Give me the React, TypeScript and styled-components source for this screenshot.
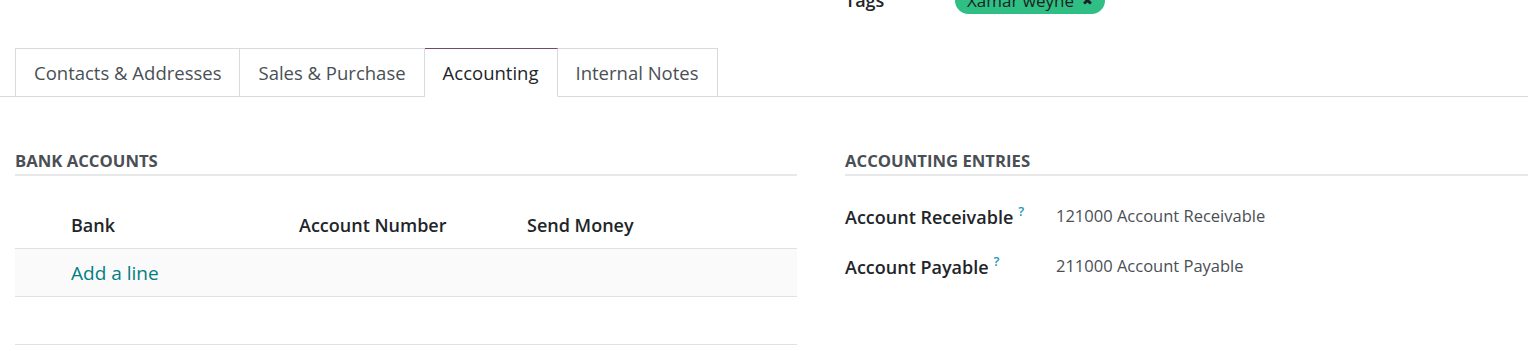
import React from "react";
import styled, { createGlobalStyle } from "styled-components";

const GlobalStyle = createGlobalStyle`
  html, body {
    margin: 0;
    padding: 0;
    background: #ffffff;
    overflow: hidden;
  }
  body {
    font-family: "Open Sans", "Noto Sans", sans-serif;
    font-size: 18px;
    color: #212529;
  }
`;

const Page = styled.div`
  width: 1528px;
  height: 351px;
  overflow: hidden;
`;

const TopRow = styled.div`
  display: grid;
  grid-template-columns: 782px 1fr;
  column-gap: 48px;
  padding: 0 0 0 15px;
  margin-top: -14px;
  height: 28px;
`;

const TagField = styled.div`
  grid-column: 2;
  display: flex;
  align-items: center;
`;

const TagLabel = styled.span`
  width: 110px;
  font-weight: 600;
  color: #212529;
`;

const TagPill = styled.span`
  display: inline-flex;
  align-items: center;
  gap: 8px;
  height: 27px;
  padding: 0 12px;
  border-radius: 14px;
  background: #2fbf84;
  color: #1b1f22;
  font-size: 17px;
`;

const TagClose = styled.span`
  font-size: 13px;
`;

const TabBar = styled.div`
  display: flex;
  margin-top: 34px;
  padding-left: 15px;
  border-bottom: 1px solid #d8dadd;
`;

const Tab = styled.div<{ $active?: boolean }>`
  height: 49px;
  box-sizing: border-box;
  padding: 0 18px;
  display: flex;
  align-items: center;
  margin-bottom: -1px;
  font-size: 18.5px;
  border: 1px solid #d8dadd;
  border-left-width: 0;
  border-top-color: ${(p) => (p.$active ? "#714b67" : "#d8dadd")};
  border-bottom-color: ${(p) => (p.$active ? "#ffffff" : "#d8dadd")};
  color: ${(p) => (p.$active ? "#212529" : "#4a4f55")};
  background: #ffffff;

  &:first-child {
    border-left-width: 1px;
  }
`;

const Columns = styled.div`
  display: grid;
  grid-template-columns: 782px 1fr;
  column-gap: 48px;
  padding: 0 0 0 15px;
  margin-top: 52px;
`;

const Section = styled.div`
  display: flex;
  flex-direction: column;
`;

const SectionTitle = styled.div`
  font-size: 16.7px;
  font-weight: 700;
  text-transform: uppercase;
  color: #4a4f55;
  padding-bottom: 2px;
  border-bottom: 2px solid #e7e8ea;
`;

const ListTable = styled.div`
  margin-top: 25px;
  display: flex;
  flex-direction: column;
`;

const ListRow = styled.div<{ $shaded?: boolean }>`
  display: grid;
  grid-template-columns: 56px 228px 228px 1fr;
  align-items: center;
  height: 48px;
  box-sizing: border-box;
  border-bottom: 1px solid #dee2e6;
  background: ${(p) => (p.$shaded ? "#fafafa" : "transparent")};
`;

const HeadCell = styled.div`
  font-weight: 600;
  color: #212529;
`;

const AddLine = styled.a`
  color: #017e84;
  font-size: 19px;
  cursor: pointer;
  white-space: nowrap;
`;

const FieldList = styled.div`
  margin-top: 20px;
  display: flex;
  flex-direction: column;
  gap: 12px;
`;

const FieldRow = styled.div`
  display: grid;
  grid-template-columns: 211px 1fr;
  align-items: center;
  height: 38px;
`;

const FieldLabel = styled.div`
  font-weight: 600;
  color: #212529;
  white-space: nowrap;
`;

const Help = styled.sup`
  color: #1a98bb;
  font-size: 13px;
  font-weight: 600;
  margin-left: 5px;
  vertical-align: 8px;
`;

const FieldValue = styled.div`
  color: #4a4f55;
  font-size: 16.5px;
`;

const tabs = ["Contacts & Addresses", "Sales & Purchase", "Accounting", "Internal Notes"];

const fields = [
  { label: "Account Receivable", value: "121000 Account Receivable" },
  { label: "Account Payable", value: "211000 Account Payable" },
];

export default function App() {
  return (
    <Page>
      <GlobalStyle />
      <TopRow>
        <TagField>
          <TagLabel>Tags</TagLabel>
          <TagPill>
            Xamar weyne <TagClose>✖</TagClose>
          </TagPill>
        </TagField>
      </TopRow>
      <TabBar>
        {tabs.map((t) => (
          <Tab key={t} $active={t === "Accounting"}>
            {t}
          </Tab>
        ))}
      </TabBar>
      <Columns>
        <Section>
          <SectionTitle>Bank Accounts</SectionTitle>
          <ListTable>
            <ListRow>
              <div />
              <HeadCell>Bank</HeadCell>
              <HeadCell>Account Number</HeadCell>
              <HeadCell>Send Money</HeadCell>
            </ListRow>
            <ListRow $shaded>
              <div />
              <AddLine>Add a line</AddLine>
            </ListRow>
            <ListRow />
          </ListTable>
        </Section>
        <Section>
          <SectionTitle>Accounting Entries</SectionTitle>
          <FieldList>
            {fields.map((f) => (
              <FieldRow key={f.label}>
                <FieldLabel>
                  {f.label}
                  <Help>?</Help>
                </FieldLabel>
                <FieldValue>{f.value}</FieldValue>
              </FieldRow>
            ))}
          </FieldList>
        </Section>
      </Columns>
    </Page>
  );
}
